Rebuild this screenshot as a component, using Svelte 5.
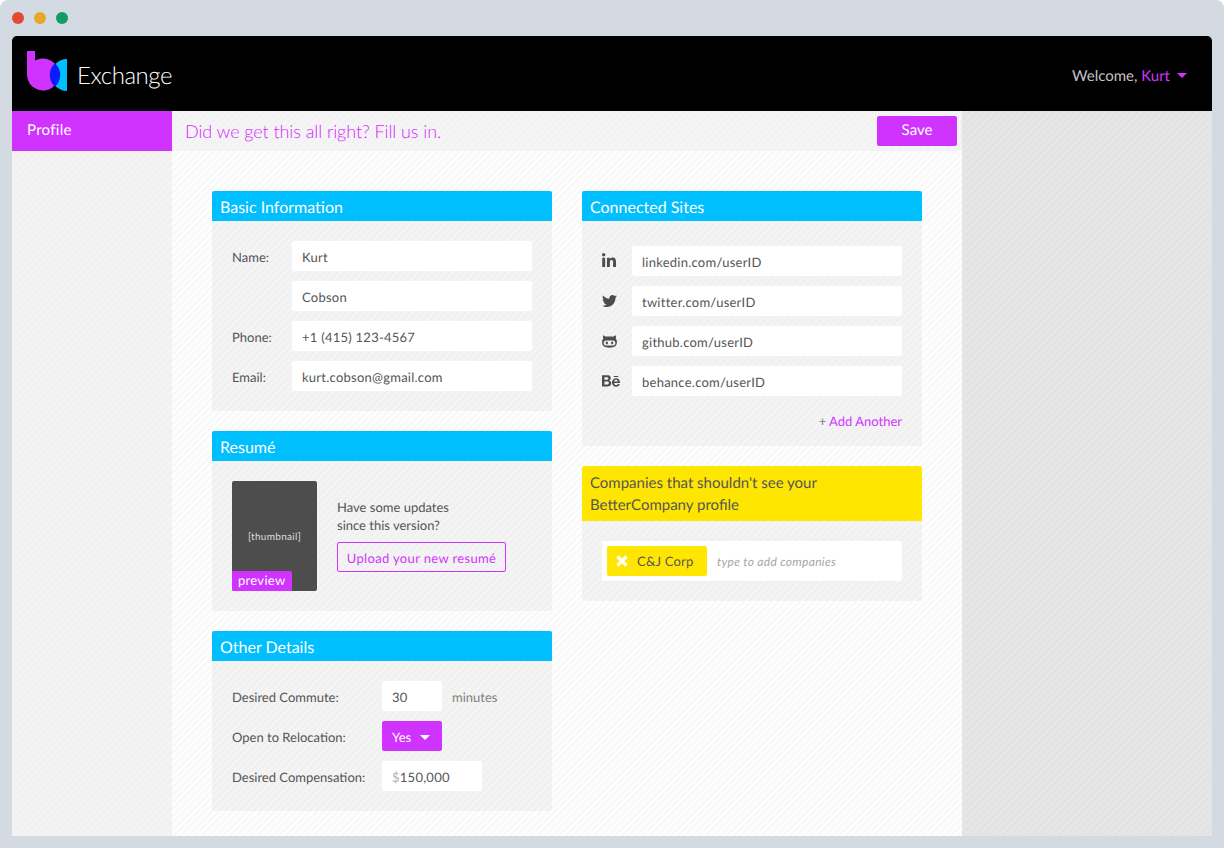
<script>
  const basics = [
    { label: 'Name:', value: 'Kurt' },
    { label: '', value: 'Cobson' },
    { label: 'Phone:', value: '+1 (415) 123-4567' },
    { label: 'Email:', value: 'kurt.cobson@gmail.com' }
  ];
</script>

<div class="frame">
  <div class="dots">
    <span class="dot red"></span>
    <span class="dot amber"></span>
    <span class="dot green"></span>
  </div>

  <div class="window">
    <header class="topbar">
      <div class="brand">
        <svg class="logo" viewBox="0 0 40 40" width="40" height="40">
          <path fill="#00bfff" d="M40 8 A16 16 0 0 0 40 40 Z" />
          <path fill="#d133ff" d="M0 0 H8 V9.6 A16 16 0 1 1 0 24 Z" />
          <path fill="#0a1cff" d="M28 12.2 A16 16 0 0 1 28 35.8 A16 16 0 0 1 28 12.2 Z" />
        </svg>
        <span class="wordmark">Exchange</span>
      </div>
      <div class="welcome">Welcome, <span class="user">Kurt</span><i class="caret"></i></div>
    </header>

    <div class="layout">
      <nav class="sidebar">
        <a class="nav-item" href="#profile">Profile</a>
      </nav>

      <main class="main">
        <div class="notice">
          <span class="notice-text">Did we get this all right? Fill us in.</span>
          <button class="save">Save</button>
        </div>

        <div class="columns">
          <div class="column">
            <section class="card">
              <h2 class="card-title">Basic Information</h2>
              <div class="card-body basics">
                {#each basics as row}
                  <div class="row">
                    <span class="row-label">{row.label}</span>
                    <input class="field" value={row.value} />
                  </div>
                {/each}
              </div>
            </section>

            <section class="card">
              <h2 class="card-title">Resumé</h2>
              <div class="card-body resume">
                <div class="thumb">
                  <span class="thumb-label">[thumbnail]</span>
                  <span class="preview">preview</span>
                </div>
                <div class="resume-side">
                  <p class="resume-text">Have some updates<br />since this version?</p>
                  <button class="upload">Upload your new resumé</button>
                </div>
              </div>
            </section>

            <section class="card">
              <h2 class="card-title">Other Details</h2>
              <div class="card-body details">
                <div class="detail-row">
                  <span class="detail-label">Desired Commute:</span>
                  <input class="field short" value="30" />
                  <span class="unit">minutes</span>
                </div>
                <div class="detail-row">
                  <span class="detail-label">Open to Relocation:</span>
                  <button class="select">Yes<i class="caret white"></i></button>
                </div>
                <div class="detail-row">
                  <span class="detail-label">Desired Compensation:</span>
                  <div class="field money"><span class="dollar">$</span>150,000</div>
                </div>
              </div>
            </section>
          </div>

          <div class="column">
            <section class="card">
              <h2 class="card-title">Connected Sites</h2>
              <div class="card-body sites">
                <div class="site">
                  <svg class="site-icon" viewBox="0 0 448 512" width="14" height="16"><path d="M100.28 448H7.4V148.9h92.88zM53.79 108.1C24.09 108.1 0 83.5 0 53.8a53.79 53.79 0 0 1 107.58 0c0 29.7-24.1 54.3-53.79 54.3zM447.9 448h-92.68V302.4c0-34.7-.7-79.2-48.29-79.2-48.29 0-55.69 37.7-55.69 76.7V448h-92.78V148.9h89.08v40.8h1.3c12.4-23.5 42.69-48.3 87.88-48.3 94 0 111.28 61.9 111.28 142.3V448z" /></svg>
                  <input class="field wide" value="linkedin.com/userID" />
                </div>
                <div class="site">
                  <svg class="site-icon" viewBox="0 0 512 512" width="15" height="16"><path d="M459.37 151.716c.325 4.548.325 9.097.325 13.645 0 138.72-105.583 298.558-298.558 298.558-59.452 0-114.68-17.219-161.137-47.106 8.447.974 16.568 1.299 25.34 1.299 49.055 0 94.213-16.568 130.274-44.832-46.132-.975-84.792-31.188-98.112-72.772 6.498.974 12.995 1.624 19.818 1.624 9.421 0 18.843-1.3 27.614-3.573-48.081-9.747-84.143-51.98-84.143-102.985v-1.299c13.969 7.797 30.214 12.67 47.431 13.319-28.264-18.843-46.781-51.005-46.781-87.391 0-19.492 5.197-37.36 14.294-52.954 51.655 63.675 129.3 105.258 216.365 109.807-1.624-7.797-2.599-15.918-2.599-24.04 0-57.828 46.782-104.934 104.934-104.934 30.213 0 57.502 12.67 76.67 33.137 23.715-4.548 46.456-13.32 66.599-25.34-7.798 24.366-24.366 44.833-46.132 57.827 21.117-2.273 41.584-8.122 60.426-16.243-14.292 20.791-32.161 39.308-52.628 54.253z" /></svg>
                  <input class="field wide" value="twitter.com/userID" />
                </div>
                <div class="site">
                  <svg class="site-icon" viewBox="0 0 16 14" width="15" height="13">
                    <path d="M1.2 0.4 L4.3 1.8 C5.4 1.5 10.6 1.5 11.7 1.8 L14.8 0.4 C15.1 1.6 15.1 2.9 14.7 3.9 C15.6 5 16 6.2 16 7.6 C16 12.2 13 13.6 8 13.6 C3 13.6 0 12.2 0 7.6 C0 6.2 0.4 5 1.3 3.9 C0.9 2.9 0.9 1.6 1.2 0.4 Z" />
                    <path fill="#f2f2f2" d="M4.2 6 H11.8 C13.3 6 14.3 7 14.3 8.6 C14.3 10.4 13.3 11.4 11.8 11.4 H4.2 C2.7 11.4 1.7 10.4 1.7 8.6 C1.7 7 2.7 6 4.2 6 Z" />
                    <ellipse cx="5.1" cy="8.7" rx="1.2" ry="1.6" />
                    <ellipse cx="10.9" cy="8.7" rx="1.2" ry="1.6" />
                  </svg>
                  <input class="field wide" value="github.com/userID" />
                </div>
                <div class="site">
                  <svg class="site-icon" viewBox="0 0 576 512" width="18" height="16"><path d="M232 237.2c31.8-15.2 48.4-38.2 48.4-74 0-70.6-52.6-87.8-113.3-87.8H0v354.4h171.8c64.4 0 124.9-30.9 124.9-102.9 0-44.5-21.1-77.4-64.7-89.7zM77.9 135.9H151c28.1 0 53.4 7.9 53.4 40.5 0 30.1-19.7 42.2-47.5 42.2h-79v-82.7zm83.3 233.7H77.9V272h84.9c34.3 0 56 14.3 56 50.6 0 35.8-25.9 47-57.6 47zm358.5-240.7H376V94h143.7v34.9zM576 305.2c0-75.9-44.4-139.2-124.9-139.2-78.2 0-131.3 58.8-131.3 135.8 0 79.9 50.3 134.7 131.3 134.7 61.3 0 101-27.6 120.1-86.3H509c-6.7 21.9-34.3 33.5-55.7 33.5-41.3 0-63-24.2-63-65.3h185.1c.3-4.2.6-8.7.6-13.2zM390.4 274c2.3-33.7 24.7-54.8 58.5-54.8 35.4 0 53.2 20.8 56.2 54.8H390.4z" /></svg>
                  <input class="field wide" value="behance.com/userID" />
                </div>
                <div class="add-another"><span class="plus">+</span> Add Another</div>
              </div>
            </section>

            <section class="card">
              <h2 class="card-title yellow">Companies that shouldn't see your BetterCompany profile</h2>
              <div class="card-body blocked">
                <div class="tag-input">
                  <span class="tag">
                    <svg viewBox="0 0 12 12" width="12" height="12"><path d="M1.5 1.5 L10.5 10.5 M10.5 1.5 L1.5 10.5" stroke="#fff" stroke-width="3.2" /></svg>
                    C&amp;J Corp
                  </span>
                  <span class="tag-hint">type to add companies</span>
                </div>
              </div>
            </section>
          </div>
        </div>
      </main>

      <div class="gutter"></div>
    </div>
  </div>
</div>

<style>
  :global(body) {
    margin: 0;
    background: #fff;
  }
  * {
    box-sizing: border-box;
  }
  .frame {
    --magenta: #d133ff;
    --cyan: #00bfff;
    --yellow: #ffe600;
    --ink: #555;
    width: 1224px;
    height: 848px;
    padding: 0 12px 12px;
    background: #d3dae1;
    border-radius: 8px 8px 0 0;
    font-family: Lato, 'Open Sans', sans-serif;
    font-size: 13px;
    color: var(--ink);
    overflow: hidden;
    text-rendering: geometricPrecision;
  }
  .dots {
    display: flex;
    gap: 10px;
    height: 36px;
    padding-top: 12px;
  }
  .dot {
    width: 12px;
    height: 12px;
    border-radius: 50%;
  }
  .red { background: #e24a33; }
  .amber { background: #e8a823; }
  .green { background: #0f9d63; }

  .window {
    height: 800px;
    border-radius: 5px 5px 0 0;
    overflow: hidden;
    display: flex;
    flex-direction: column;
  }
  .topbar {
    height: 75px;
    flex: none;
    background: #000;
    display: flex;
    align-items: center;
    justify-content: space-between;
    padding: 0 25px 0 15px;
  }
  .brand {
    display: flex;
    align-items: center;
    gap: 10px;
  }
  .logo {
    display: block;
    margin-top: -5px;
  }
  .wordmark {
    font-size: 24px;
    font-weight: 300;
    color: #fff;
    letter-spacing: -0.45px;
    padding-top: 4px;
  }
  .welcome {
    font-size: 15px;
    color: #c4c4c4;
    padding-top: 4px;
  }
  .user {
    color: var(--magenta);
  }
  .caret {
    display: inline-block;
    width: 0;
    height: 0;
    margin-left: 7px;
    vertical-align: 3px;
    border-left: 5px solid transparent;
    border-right: 5px solid transparent;
    border-top: 5px solid var(--magenta);
  }
  .caret.white {
    margin-left: 9px;
    vertical-align: 2px;
    border-top-color: #fff;
  }

  .layout {
    flex: 1;
    display: flex;
    min-height: 0;
  }
  .sidebar {
    width: 160px;
    flex: none;
    background: repeating-linear-gradient(135deg, #f1f1f1 0 2.475px, #f4f4f4 2.475px 4.95px);
  }
  .nav-item {
    display: block;
    height: 40px;
    line-height: 38px;
    padding-left: 15px;
    background: var(--magenta);
    color: #fff;
    font-size: 15px;
    letter-spacing: 0.3px;
    text-decoration: none;
  }
  .main {
    width: 790px;
    flex: none;
    background: repeating-linear-gradient(135deg, #fff 0 2.475px, #f9f9f9 2.475px 4.95px);
  }
  .gutter {
    flex: 1;
    background: repeating-linear-gradient(135deg, #e2e2e2 0 2.475px, #e6e6e6 2.475px 4.95px);
  }
  .notice {
    height: 40px;
    display: flex;
    align-items: center;
    justify-content: space-between;
    padding: 0 5px 0 13px;
    background: repeating-linear-gradient(135deg, #f2f2f2 0 2.475px, #f5f5f5 2.475px 4.95px);
  }
  .notice-text {
    font-size: 18px;
    font-weight: 300;
    color: #d426ff;
    letter-spacing: -0.08px;
  }
  .save {
    width: 80px;
    height: 30px;
    padding: 0 0 2px;
    border: 0;
    border-radius: 2px;
    background: var(--magenta);
    color: #fff;
    font: 15px Lato, sans-serif;
    text-rendering: geometricPrecision;
  }

  .columns {
    display: flex;
    gap: 30px;
    padding: 40px 40px 0;
  }
  .column {
    width: 340px;
    display: flex;
    flex-direction: column;
    gap: 20px;
  }
  .card {
    border-radius: 2px;
    overflow: hidden;
  }
  .card-title {
    margin: 0;
    height: 30px;
    padding: 0 8px;
    background: var(--cyan);
    color: #fff;
    font-size: 16px;
    font-weight: 400;
    line-height: 33px;
  }
  .card-title.yellow {
    height: 55px;
    padding: 6px 8px 0;
    background: var(--yellow);
    color: var(--ink);
    font-size: 15px;
    line-height: 22px;
  }
  .card-body {
    background: repeating-linear-gradient(135deg, #f0f0f0 0 2.475px, #f4f4f4 2.475px 4.95px);
  }
  .field {
    display: block;
    height: 30px;
    padding: 2px 10px 0;
    border: 0;
    border-radius: 2px;
    background: #fff;
    color: var(--ink);
    font: 13px/28px Lato, sans-serif;
    letter-spacing: 0.25px;
    outline: none;
    text-rendering: geometricPrecision;
  }

  .basics {
    padding: 20px;
    display: flex;
    flex-direction: column;
    gap: 10px;
  }
  .row {
    display: flex;
    align-items: center;
  }
  .row-label {
    width: 60px;
    padding-top: 2px;
    min-height: 1px;
  }
  .row .field {
    width: 240px;
  }

  .resume {
    height: 150px;
    padding: 20px;
    display: flex;
    gap: 20px;
  }
  .thumb {
    position: relative;
    width: 85px;
    height: 110px;
    border-radius: 2px;
    background: #4d4d4d;
    display: flex;
    align-items: center;
    justify-content: center;
    overflow: hidden;
  }
  .thumb-label {
    padding-top: 2px;
    font-size: 10px;
    color: #ddd;
    letter-spacing: 0.3px;
  }
  .preview {
    position: absolute;
    left: 0;
    bottom: 0;
    width: 60px;
    height: 20px;
    padding-left: 6px;
    border-radius: 0 2px 0 0;
    background: var(--magenta);
    color: #fff;
    line-height: 19px;
    letter-spacing: 0.3px;
  }
  .resume-text {
    margin: 17px 0 0;
    line-height: 18px;
  }
  .upload {
    display: block;
    margin-top: 8px;
    width: 169px;
    height: 30px;
    padding: 2px 0 0;
    border: 1px solid var(--magenta);
    border-radius: 2px;
    background: transparent;
    color: var(--magenta);
    font: 13px Lato, sans-serif;
    letter-spacing: 0.35px;
    text-rendering: geometricPrecision;
  }

  .details {
    padding: 20px;
    display: flex;
    flex-direction: column;
    gap: 10px;
  }
  .detail-row {
    display: flex;
    align-items: center;
  }
  .detail-label {
    width: 150px;
    flex: none;
    padding-top: 2px;
  }
  .short {
    width: 60px;
  }
  .unit {
    margin-left: 10px;
    padding-top: 2px;
    color: #808080;
  }
  .select {
    width: 60px;
    height: 30px;
    padding: 2px 0 0 10px;
    border: 0;
    border-radius: 2px;
    background: var(--magenta);
    color: #fff;
    font: 13px Lato, sans-serif;
    text-align: left;
    text-rendering: geometricPrecision;
  }
  .money {
    width: 100px;
  }
  .dollar {
    color: #b3b3b3;
  }

  .sites {
    padding: 25px 20px 16px;
  }
  .site {
    display: flex;
    align-items: center;
    margin-bottom: 10px;
  }
  .site-icon {
    display: block;
    margin-right: auto;
    fill: #4d4d4d;
  }
  .wide {
    width: 270px;
  }
  .add-another {
    margin-top: 16px;
    text-align: right;
    color: var(--magenta);
    line-height: 18px;
  }
  .plus {
    color: #808080;
  }

  .blocked {
    padding: 20px;
  }
  .tag-input {
    height: 40px;
    padding: 5px;
    border-radius: 2px;
    background: #fff;
    display: flex;
    align-items: center;
    gap: 10px;
  }
  .tag {
    width: 100px;
    height: 30px;
    padding-left: 9px;
    border-radius: 2px;
    background: var(--yellow);
    display: flex;
    align-items: center;
    gap: 9px;
    letter-spacing: 0.2px;
  }
  .tag-hint {
    font-size: 12px;
    font-style: italic;
    color: #a6a6a6;
    letter-spacing: 0.3px;
  }
</style>
